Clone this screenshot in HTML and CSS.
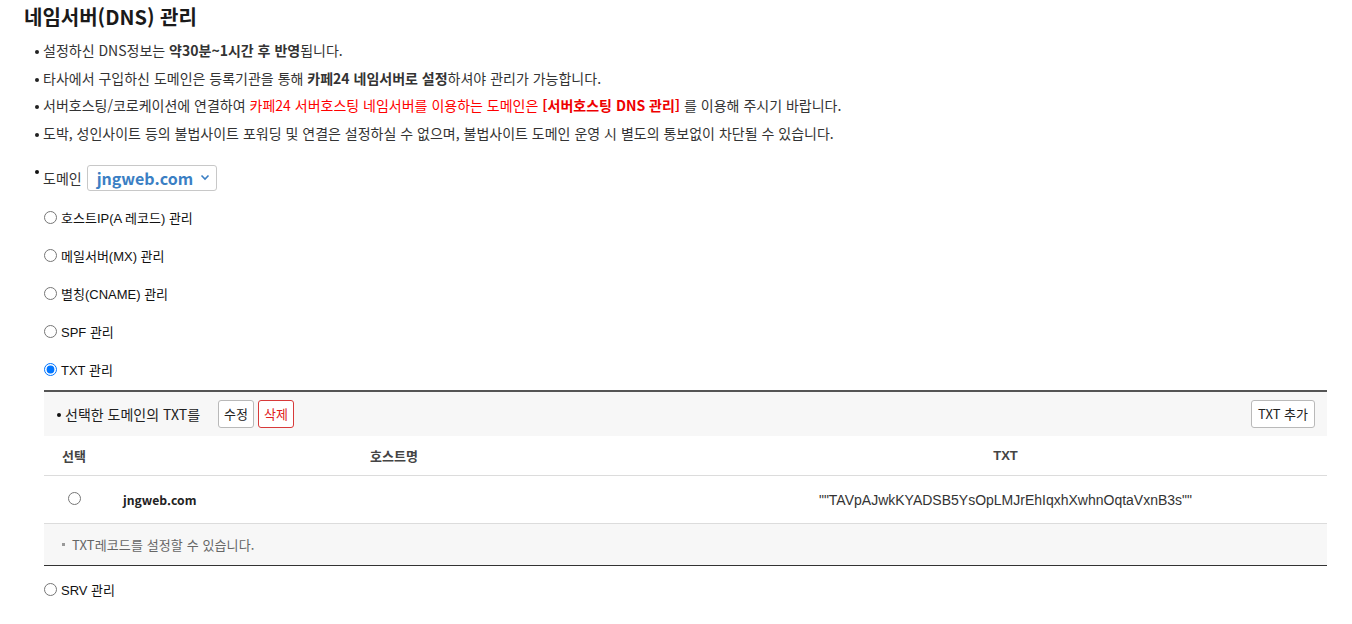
FILE: index.html
```html
<!DOCTYPE html>
<html lang="ko">
<head>
<meta charset="utf-8">
<title>네임서버(DNS) 관리</title>
<link rel="stylesheet" href="styles.css">
</head>
<body>
<div class="page">
  <h1 class="title">네임서버(DNS) 관리</h1>
  <ul class="notice">
    <li>설정하신 DNS정보는 <b>약30분~1시간 후 반영</b>됩니다.</li>
    <li>타사에서 구입하신 도메인은 등록기관을 통해 <b>카페24 네임서버로 설정</b>하셔야 관리가 가능합니다.</li>
    <li>서버호스팅/코로케이션에 연결하여 <span class="red">카페24 서버호스팅 네임서버를 이용하는 도메인은 <b>[서버호스팅 DNS 관리]</b></span> 를 이용해 주시기 바랍니다.</li>
    <li>도박, 성인사이트 등의 불법사이트 포워딩 및 연결은 설정하실 수 없으며, 불법사이트 도메인 운영 시 별도의 통보없이 차단될 수 있습니다.</li>
  </ul>

  <div class="domain-row">
    <span class="dot"></span>
    <span class="domain-label">도메인</span>
    <div class="select">
      <span class="select-text">jngweb.com</span>
      <svg class="chev" width="10" height="7" viewBox="0 0 10 7"><path d="M1.5 1.5 L5 5 L8.5 1.5" fill="none" stroke="#3b7fc4" stroke-width="1.6"/></svg>
    </div>
  </div>

  <div class="radios">
    <label class="radio-row"><input type="radio" name="t"><span>호스트IP(A 레코드) 관리</span></label>
    <label class="radio-row"><input type="radio" name="t"><span>메일서버(MX) 관리</span></label>
    <label class="radio-row"><input type="radio" name="t"><span>별칭(CNAME) 관리</span></label>
    <label class="radio-row"><input type="radio" name="t"><span>SPF 관리</span></label>
    <label class="radio-row"><input type="radio" name="t" checked><span>TXT 관리</span></label>
  </div>

  <div class="box">
    <div class="box-head">
      <div class="head-left">
        <span class="dot small"></span>
        <span class="head-text">선택한 도메인의 TXT를</span>
        <button class="btn">수정</button>
        <button class="btn btn-red">삭제</button>
      </div>
      <button class="btn">TXT 추가</button>
    </div>
    <table class="grid">
      <colgroup><col class="c1"><col class="c2"><col class="c3"></colgroup>
      <thead>
        <tr><th>선택</th><th>호스트명</th><th class="th-txt">TXT</th></tr>
      </thead>
      <tbody>
        <tr class="data">
          <td class="cell-radio"><input type="radio" name="r"></td>
          <td class="cell-host">jngweb.com</td>
          <td class="cell-txt">""TAVpAJwkKYADSB5YsOpLMJrEhIqxhXwhnOqtaVxnB3s""</td>
        </tr>
      </tbody>
    </table>
    <div class="box-foot"><span class="sq"></span>TXT레코드를 설정할 수 있습니다.</div>
  </div>

  <div class="radios last">
    <label class="radio-row"><input type="radio" name="t"><span>SRV 관리</span></label>
  </div>
</div>
</body>
</html>
```

FILE: styles.css
```css
* { box-sizing: border-box; }
html, body { margin: 0; padding: 0; background: #fff; }
body {
  font-family: "Noto Sans CJK KR", "Noto Sans", sans-serif;
  color: #333;
  font-size: 13px;
}
.page { padding: 3px 25px 0 24px; }

.title {
  margin: 0;
  font-size: 20px;
  line-height: 28px;
  font-weight: 700;
  color: #1a1a1a;
}

.notice {
  list-style: none;
  margin: 6px 0 0 0;
  padding: 0 0 0 19px;
}
.notice li {
  position: relative;
  font-size: 14px;
  line-height: 27.7px;
  color: #333;
}
.notice li::before {
  content: "";
  position: absolute;
  left: -8px;
  top: 13px;
  width: 4px;
  height: 4px;
  border-radius: 50%;
  background: #222;
}
.notice b { font-weight: 700; color: #333; }
.notice .red { color: #ff0000; }
.notice .red b { color: #ee0000; }

.domain-row {
  display: flex;
  align-items: center;
  margin-top: 17px;
  height: 26px;
  padding-left: 11px;
}
.dot {
  width: 4px;
  height: 4px;
  border-radius: 50%;
  background: #111;
  align-self: flex-start;
  margin-top: 5px;
  margin-right: 4px;
}
.domain-label { color: #333; font-size: 14px; margin-right: 5px; }
.select {
  display: flex;
  align-items: center;
  justify-content: space-between;
  width: 130px;
  height: 26px;
  border: 1px solid #c8c8c8;
  border-radius: 3px;
  padding: 0 6px 0 9px;
}
.select-text {
  color: #3b7fc4;
  font-weight: 700;
  font-size: 16px;
  line-height: 24px;
}

.radios { margin-top: 8px; padding-left: 20px; }
.radios.last { margin-top: 4px; }
.radio-row {
  display: flex;
  align-items: center;
  height: 38px;
  font-family: "Liberation Sans", "Noto Sans CJK KR", sans-serif;
  color: #111;
}
.radio-row input {
  margin: 0 4px 0 0;
  width: 13px;
  height: 13px;
}

.box {
  margin-left: 20px;
  margin-top: 1px;
  border-top: 2px solid #555;
  border-bottom: 1px solid #333;
}
.box-head {
  display: flex;
  align-items: center;
  justify-content: space-between;
  height: 44px;
  background: #f7f7f7;
  padding: 0 12px 0 13px;
}
.head-left { display: flex; align-items: center; }
.dot.small { width: 4px; height: 4px; align-self: center; margin: 2px 4px 0 0; background: #111; }
.head-text { color: #222; font-size: 14px; margin-right: 18px; }
.btn {
  font-family: "Noto Sans CJK KR", sans-serif;
  font-size: 13px;
  height: 28px;
  padding: 0 5px;
  background: #fff;
  border: 1px solid #b9b9b9;
  border-radius: 3px;
  color: #222;
  margin-right: 4px;
  line-height: 26px;
}
.box-head > .btn { margin-right: 0; padding: 0 6px; }
.btn-red { border-color: #d73a3a; color: #e02020; }

.grid {
  width: 100%;
  border-collapse: collapse;
  table-layout: fixed;
}
.c1 { width: 60px; }
.c2 { width: 580px; }
.grid th {
  height: 40px;
  font-weight: 700;
  color: #444;
  text-align: center;
  border-bottom: 1px solid #dcdcdc;
  padding: 0 0 1px 0;
}
.grid th:first-child { text-align: left; padding-left: 18px; }
.th-txt { font-family: "Liberation Sans", sans-serif; }
.grid td {
  height: 48px;
  border-bottom: 1px solid #dcdcdc;
  padding: 0;
}
.cell-radio { text-align: center; }
.cell-radio input { margin: 2px 0 0 0; width: 13px; height: 13px; }
.cell-host { font-weight: 700; font-size: 12.2px; color: #222; padding-left: 19px !important; }
.cell-txt {
  text-align: center;
  font-family: "Liberation Sans", sans-serif;
  font-size: 14px;
  color: #333;
}

.box-foot {
  height: 41px;
  background: #f7f7f7;
  display: flex;
  align-items: center;
  padding: 0 0 1px 18px;
  color: #666;
  letter-spacing: 0.1px;
}
.sq {
  width: 3px;
  height: 3px;
  background: #999;
  margin-right: 7px;
  margin-top: 1px;
}
```
